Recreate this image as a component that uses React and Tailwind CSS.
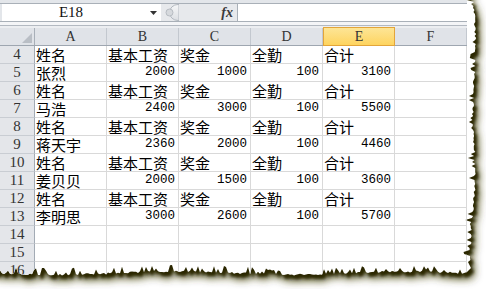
import React from 'react'

const COLS = ['A', 'B', 'C', 'D', 'E', 'F']
const HEAD = ['姓名', '基本工资', '奖金', '全勤', '合计']

const ROWS = [
  [4, HEAD],
  [5, ['张烈', 2000, 1000, 100, 3100]],
  [6, HEAD],
  [7, ['马浩', 2400, 3000, 100, 5500]],
  [8, HEAD],
  [9, ['蒋天宇', 2360, 2000, 100, 4460]],
  [10, HEAD],
  [11, ['姜贝贝', 2000, 1500, 100, 3600]],
  [12, HEAD],
  [13, ['李明思', 3000, 2600, 100, 5700]],
  [14, []],
  [15, []],
  [16, []],
]

// torn paper edge, right and bottom
function makeTorn() {
  let s = 12345
  const rnd = () => {
    s = (s * 16807) % 2147483647
    return s / 2147483647
  }
  const p = ['M-20 -20', 'L472 -20']
  for (let y = 0; y <= 262; y += 2) {
    const base = 474 + 1.5 * Math.sin(y / 23) + 1.5 * Math.sin(y / 61)
    const dip = rnd() < 0.25 ? 3 + rnd() * 5 : rnd() * 2
    p.push(`L${(base - dip).toFixed(1)} ${y}`)
  }
  p.push('L471 268', 'L467 272')
  for (let x = 462; x >= -20; x -= 2) {
    const base = 274 + 1.5 * Math.sin(x / 37)
    const dip = rnd() < 0.25 ? 3 + rnd() * 5 : rnd() * 2
    p.push(`L${x} ${(base - dip).toFixed(1)}`)
  }
  p.push('Z')
  return p.join(' ')
}

const TORN = makeTorn()

const serif = "[font-family:'Liberation_Serif',serif]"

export default function App() {
  return (
    <div className="relative w-[486px] h-[289px] bg-white overflow-hidden">
      {/* shadow under the torn edge */}
      <svg className="absolute inset-0" width="486" height="289">
        <defs>
          <filter id="soft" x="-10%" y="-10%" width="120%" height="120%">
            <feGaussianBlur stdDeviation="4" />
          </filter>
          <filter id="hard" x="-10%" y="-10%" width="120%" height="120%">
            <feGaussianBlur stdDeviation="1.5" />
          </filter>
          <clipPath id="torn">
            <path d={TORN} />
          </clipPath>
        </defs>
        <g transform="translate(4 6)" filter="url(#soft)">
          <path d={TORN} fill="#3f3c10" />
        </g>
        <g transform="translate(3 4)" filter="url(#hard)">
          <path d={TORN} fill="#2a2803" />
        </g>
      </svg>

      <div className="relative w-[486px] h-[289px] bg-white [clip-path:url(#torn)]">
        <div className="w-[467px]">
          <FormulaBar />
          <HeaderRow />
          {ROWS.map(([n, cells]) => (
            <Row key={n} n={n} cells={cells} />
          ))}
        </div>
      </div>
    </div>
  )
}

function FormulaBar() {
  return (
    <div className="h-[28px] bg-[#e3e6ea] flex flex-col">
      <div className="h-[3px]" />
      <div className="flex h-[19px] border-y border-[#a9b0b8]">
        <div className="ml-[2px] w-[159px] bg-white flex items-center">
          <span className={`w-[138px] text-center text-[15px] leading-none text-[#111] ${serif}`}>
            E18
          </span>
          <svg width="7" height="4" viewBox="0 0 7 4" className="ml-[10px]">
            <polygon points="0,0 7,0 3.5,4" fill="#333" />
          </svg>
        </div>
        <div className="relative w-[77px] bg-[#e7e9ec] border-r border-[#a9b0b8] flex items-center justify-end pr-[4px]">
          <svg width="18" height="17" viewBox="0 0 18 17" className="absolute left-0 top-0">
            <defs>
              <linearGradient id="pill" x1="0" y1="0" x2="0" y2="1">
                <stop offset="0%" stopColor="#f6f7f8" />
                <stop offset="100%" stopColor="#dcdfe3" />
              </linearGradient>
            </defs>
            <path d="M17 0.5 A8.5 8 0 0 0 17 16.5 L18 16.5 L18 0.5 Z" fill="url(#pill)" stroke="#b3b9c0" strokeWidth="1" />
            <circle cx="8.5" cy="8.5" r="3.5" fill="#d6d9dd" stroke="#b7bcc2" strokeWidth="1" />
          </svg>
          <span className={`italic font-bold text-[14px] leading-none text-[#3a3a3a] ${serif}`}>fx</span>
        </div>
        <div className="flex-1 bg-white" />
      </div>
      <div className="h-[3px] bg-[#f4f5f7]" />
      <div className="h-[1px] bg-[#b3b9c1]" />
      <div className="h-[2px] bg-[#eceef1]" />
    </div>
  )
}

function HeaderRow() {
  return (
    <div className="flex h-[18px] bg-[#e0e3e8] border-b border-[#9ea6b0]">
      <div className="w-[35px] border-r border-[#a8afb8] flex items-end justify-end pr-[2px] pb-[2px]">
        <svg width="10" height="10" viewBox="0 0 10 10">
          <polygon points="10,0 10,10 0,10" fill="#b9bec5" />
        </svg>
      </div>
      {COLS.map(c => {
        const base = `w-[72px] flex items-center justify-center text-[14px] text-[#333] ${serif}`
        const look =
          c === 'E'
            ? '-mt-px -mb-px border border-[#e3a53a] bg-gradient-to-b from-[#fde595] to-[#fed45e]'
            : 'border-r border-[#c3c8cf]'
        return (
          <div key={c} className={`${base} ${look}`}>
            {c}
          </div>
        )
      })}
    </div>
  )
}

function Row({ n, cells }) {
  return (
    <div className="flex h-[18px]">
      <div className={`w-[35px] bg-[#e4e6ea] border-r border-b border-r-[#a3abb5] border-b-[#c9cdd3] flex items-center justify-center text-[15px] leading-none text-[#333] ${serif}`}>
        {n}
      </div>
      {COLS.map((c, i) => {
        const v = cells[i]
        const isNum = typeof v === 'number'
        const look = isNum
          ? "justify-end pr-[3px] text-[12.5px] [font-family:'Liberation_Mono',monospace]"
          : "pl-[1px] text-[15px] [font-family:'Noto_Sans_CJK_SC',sans-serif] whitespace-nowrap"
        return (
          <div
            key={c}
            className={`w-[72px] border-r border-b border-[#d9d9d9] flex items-center leading-[17px] text-black ${look}`}
          >
            {v}
          </div>
        )
      })}
    </div>
  )
}
